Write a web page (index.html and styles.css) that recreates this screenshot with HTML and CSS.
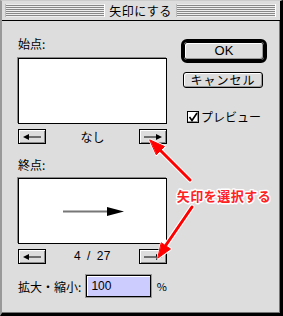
FILE: index.html
```html
<!DOCTYPE html>
<html lang="ja">
<head>
<meta charset="utf-8">
<link rel="stylesheet" href="styles.css">
</head>
<body>
<div class="window">
  <div class="titlebar">
    <div class="stripes"></div>
    <div class="title">矢印にする</div>
    <div class="stripes"></div>
  </div>
  <div class="content">
    <div class="left">
      <div class="label">始点:</div>
      <div class="preview"></div>
      <div class="nav">
        <div class="btn"><svg width="26" height="12" viewBox="0 0 26 12"><line x1="9" y1="6" x2="22" y2="6" stroke="#000" stroke-width="1"/><polygon points="4,6 10,3 10,9" fill="#000"/></svg></div>
        <div class="navtext">なし</div>
        <div class="btn"><svg width="26" height="12" viewBox="0 0 26 12"><line x1="4" y1="6" x2="17" y2="6" stroke="#000" stroke-width="1"/><polygon points="22,6 16,3 16,9" fill="#000"/></svg></div>
      </div>
      <div class="label label2">終点:</div>
      <div class="preview">
        <svg class="arrowprev" width="147" height="64" viewBox="0 0 147 64"><line x1="44" y1="32.5" x2="90" y2="32.5" stroke="#777" stroke-width="2"/><polygon points="88,28 105,32.5 88,37" fill="#000"/></svg>
      </div>
      <div class="nav">
        <div class="btn"><svg width="26" height="12" viewBox="0 0 26 12"><line x1="9" y1="6" x2="22" y2="6" stroke="#000" stroke-width="1"/><polygon points="4,6 10,3 10,9" fill="#000"/></svg></div>
        <div class="navtext num">4 / 27</div>
        <div class="btn"><svg width="26" height="12" viewBox="0 0 26 12"><line x1="4" y1="6" x2="17" y2="6" stroke="#000" stroke-width="1"/><polygon points="22,6 16,3 16,9" fill="#000"/></svg></div>
      </div>
      <div class="scale">
        <span class="scalelabel">拡大・縮小:</span>
        <div class="input">100</div>
        <span class="pct">%</span>
      </div>
    </div>
    <div class="right">
      <div class="okframe"><div class="pushbtn ok">OK</div></div>
      <div class="pushbtn cancel">キャンセル</div>
      <label class="check"><span class="box"><svg width="12" height="12" viewBox="0 0 12 12"><path d="M2.5 6 L5 9.5 L10 2" fill="none" stroke="#000" stroke-width="1.6"/></svg></span>プレビュー</label>
    </div>
  </div>
  <svg class="overlay" width="283" height="316" viewBox="0 0 283 316">
    <g stroke="#fff" stroke-width="5" stroke-linecap="round" fill="#fff">
      <line x1="190" y1="180" x2="160" y2="150"/>
      <polygon points="150,140 164.5,146.5 156.5,154.5" stroke-linejoin="round" stroke-width="3"/>
      <line x1="192" y1="207" x2="166" y2="245"/>
      <polygon points="158,258 170.5,249 161.5,243" stroke-linejoin="round" stroke-width="3"/>
    </g>
    <g stroke="#f00" stroke-width="3" stroke-linecap="round" fill="#f00">
      <line x1="190" y1="180" x2="160" y2="150"/>
      <polygon points="150,140 164.5,146.5 156.5,154.5" stroke-width="1"/>
      <line x1="192" y1="207" x2="166" y2="245"/>
      <polygon points="158,258 170.5,249 161.5,243" stroke-width="1"/>
    </g>
    <text class="note" x="224" y="201" text-anchor="middle">矢印を選択する</text>
  </svg>
</div>
</body>
</html>
```

FILE: styles.css
```css
* { box-sizing: border-box; }
html, body { margin: 0; padding: 0; }
body {
  width: 283px;
  height: 316px;
  background: #ddd;
  font-family: "Noto Sans CJK JP", "Noto Sans", sans-serif;
  font-size: 12px;
  color: #000;
  overflow: hidden;
}
.window {
  position: relative;
  width: 283px;
  height: 316px;
  background: #ddd;
  border-left: 2px solid #999;
  border-top: 1px solid #ccc;
  border-right: 3px solid #000;
  border-bottom: 3px solid #000;
  box-shadow: inset -1px -1px 0 #777;
}
.titlebar {
  height: 20px;
  display: flex;
  align-items: center;
  padding: 0 4px 0 3px;
  border-bottom: 1px solid #000;
  background: #ddd;
}
.stripes {
  flex: 1;
  height: 13px;
  background: repeating-linear-gradient(to bottom, #eee 0 1px, #888 1px 2px);
  border-left: 1px solid #bbb;
  border-right: 1px solid #fff;
}
.title {
  padding: 0 4px;
  font-size: 12px;
  line-height: 14px;
  letter-spacing: 0.5px;
}
.content {
  display: flex;
  padding: 15px 0 0 16px;
}
.left {
  width: 149px;
}
.label {
  height: 16px;
  line-height: 16px;
  font-size: 12px;
  margin-bottom: 6px;
}
.label2 { margin-top: 13px; margin-bottom: 5px; }
.preview {
  width: 149px;
  height: 66px;
  background: #fff;
  border: 1px solid #000;
  box-shadow: -1px -1px 0 #888;
  position: relative;
}
.arrowprev { display: block; }
.nav {
  margin-top: 5px;
  display: flex;
  align-items: center;
  justify-content: space-between;
  height: 15px;
}
.btn {
  width: 28px;
  height: 15px;
  border: 1px solid #000;
  background: #ddd;
  box-shadow: inset 1px 1px 0 #fff, inset -1px -1px 0 #888;
  display: flex;
  align-items: center;
  justify-content: center;
}
.btn svg { display: block; }
.navtext {
  flex: 1;
  text-align: center;
  font-size: 12px;
  line-height: 15px;
}
.num {
  font-family: "Liberation Sans", sans-serif;
  font-size: 12px;
  word-spacing: 2px;
  letter-spacing: 0.5px;
}
.scale {
  margin-top: 11px;
  display: flex;
  align-items: center;
  height: 22px;
}
.scalelabel {
  font-size: 12px;
  width: 69px;
}
.input {
  width: 65px;
  height: 22px;
  background: #ccf;
  border: 1px solid #000;
  box-shadow: 0 0 0 1px #999, inset 1px 1px 0 #fff;
  padding-left: 4px;
  line-height: 20px;
  font-family: "Liberation Sans", sans-serif;
  font-size: 12px;
}
.pct {
  margin-left: 6px;
  font-size: 11px;
}
.right {
  margin-left: 14px;
  width: 86px;
  display: flex;
  flex-direction: column;
  padding-top: 3px;
}
.okframe {
  width: 86px;
  height: 24px;
  border: 3px solid #000;
  border-radius: 6px;
  background: #aaa;
  padding: 0;
  display: flex;
  box-shadow: inset 1px 1px 0 #fff;
}
.pushbtn {
  border: 1px solid #000;
  border-radius: 3px;
  background: #ddd;
  box-shadow: inset 1px 1px 0 #fff, inset -1px -1px 0 #999;
  text-align: center;
  font-size: 12px;
}
.ok {
  flex: 1;
  line-height: 16px;
  font-family: "Liberation Sans", sans-serif;
  font-size: 13px;
}
.cancel {
  margin-top: 9px;
  margin-left: 2px;
  width: 80px;
  height: 16px;
  line-height: 14px;
  letter-spacing: 1px;
}
.check {
  margin-top: 20px;
  margin-left: 6px;
  display: flex;
  align-items: center;
  font-size: 12px;
}
.box {
  width: 12px;
  height: 12px;
  border: 1px solid #000;
  background: #fff;
  margin-right: 2px;
  box-shadow: inset -1px -1px 0 #999;
  position: relative;
}
.box svg { position: absolute; left: -1px; top: -1px; }
.overlay {
  position: absolute;
  left: -2px;
  top: -1px;
  pointer-events: none;
}
.note {
  font-family: "Noto Sans CJK JP", sans-serif;
  font-size: 13px;
  font-weight: 700;
  fill: #f22;
  stroke: #fff;
  stroke-width: 3px;
  paint-order: stroke;
  stroke-linejoin: round;
  letter-spacing: 0.5px;
}
```
